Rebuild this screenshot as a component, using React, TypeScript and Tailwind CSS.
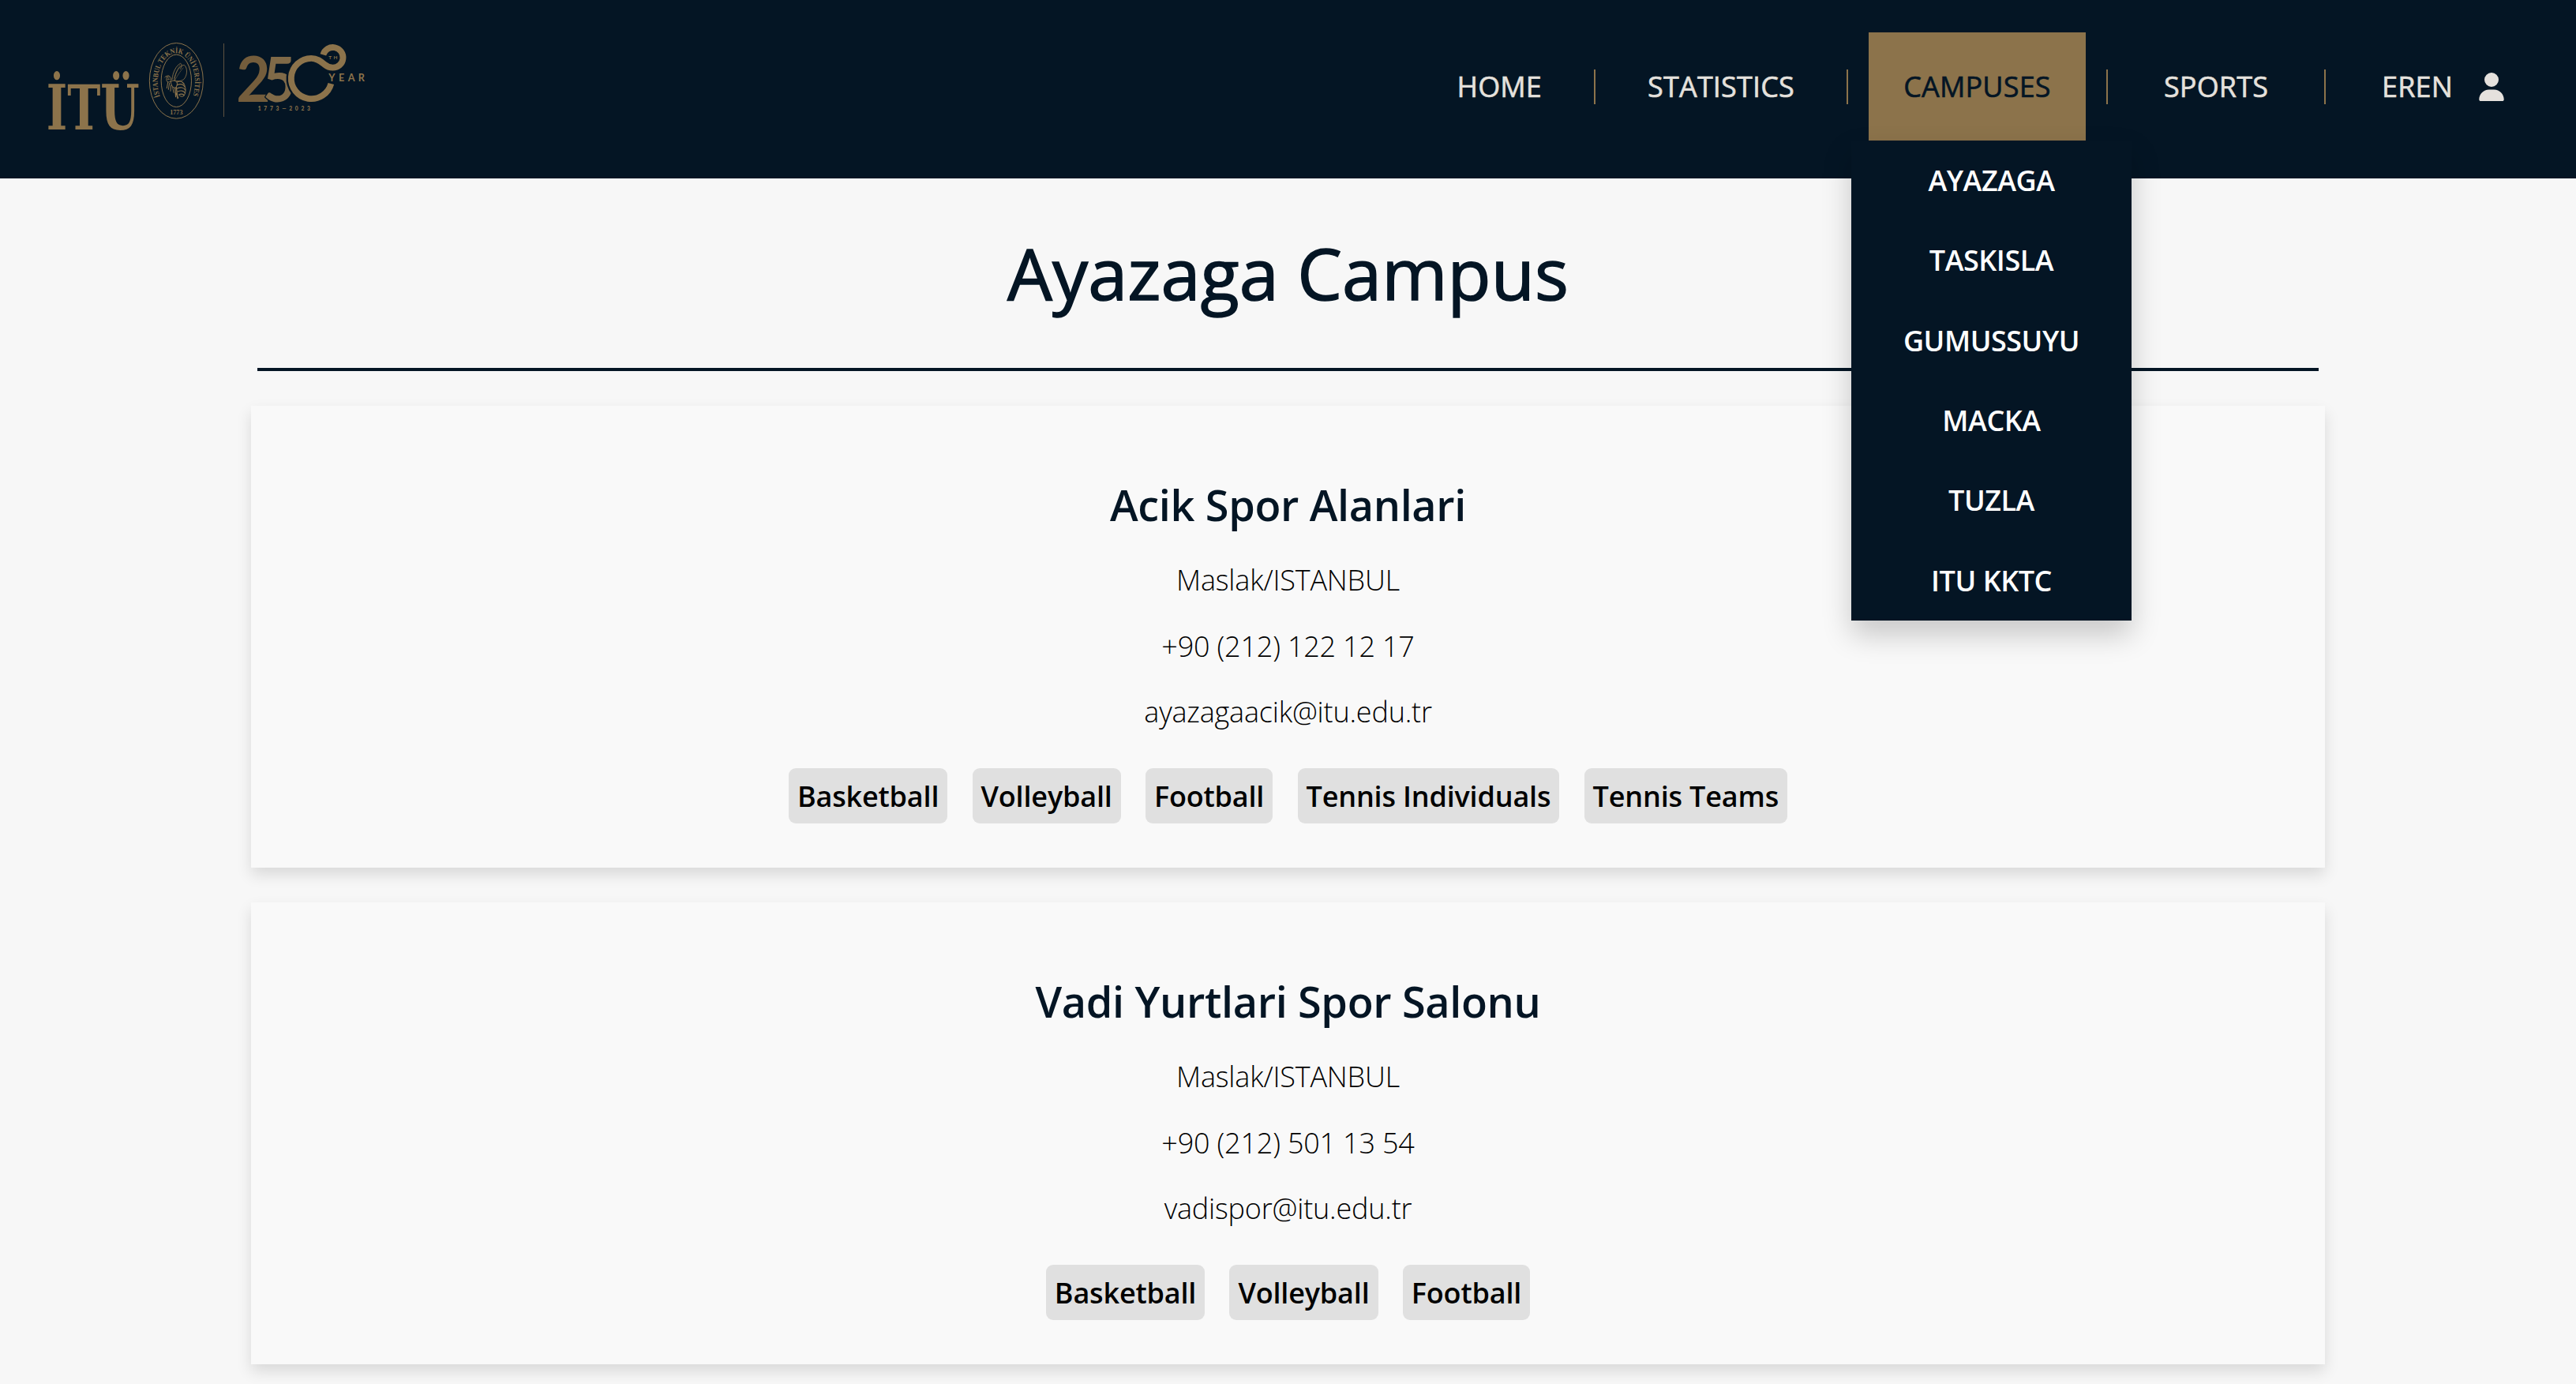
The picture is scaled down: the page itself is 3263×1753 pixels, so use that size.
import { FaUser } from "react-icons/fa6";

const campuses = ["AYAZAGA", "TASKISLA", "GUMUSSUYU", "MACKA", "TUZLA", "ITU KKTC"];

const facilities = [
  {
    name: "Acik Spor Alanlari",
    address: "Maslak/ISTANBUL",
    phone: "+90 (212) 122 12 17",
    email: "ayazagaacik@itu.edu.tr",
    sports: ["Basketball", "Volleyball", "Football", "Tennis Individuals", "Tennis Teams"],
  },
  {
    name: "Vadi Yurtlari Spor Salonu",
    address: "Maslak/ISTANBUL",
    phone: "+90 (212) 501 13 54",
    email: "vadispor@itu.edu.tr",
    sports: ["Basketball", "Volleyball", "Football"],
  },
];

function Logo() {
  return (
    <svg className="h-[226px] w-[480px] shrink-0" viewBox="0 0 480 226" fill="#8c734b" aria-label="İTÜ 250th year">
      <g transform="translate(40 30) scale(0.33333)">
        <text x="56" y="403" fontFamily="DejaVu Serif" fontWeight="700" fontSize="236" textLength="354" lengthAdjust="spacingAndGlyphs">
          İTÜ
        </text>

        {/* seal */}
        <g fill="none" stroke="#8c734b" strokeWidth="3">
          <ellipse cx="550" cy="217" rx="102" ry="143.500" />
          <ellipse cx="550" cy="217" rx="57.500" ry="99.500" />
        </g>
        <path id="seal-arc" d="M488 277 A71 111 0 1 1 612 277" fill="none" />
        <text fontFamily="Liberation Serif" fontWeight="700" fontSize="28">
          <textPath href="#seal-arc" textLength="405" lengthAdjust="spacingAndGlyphs">
            İSTANBUL TEKNİK ÜNİVERSİTESİ
          </textPath>
        </text>
        <text x="550" y="346" textAnchor="middle" fontFamily="Liberation Serif" fontWeight="700" fontSize="27" textLength="49" lengthAdjust="spacingAndGlyphs">
          1773
        </text>

        {/* bee */}
        <g fill="none" stroke="#8c734b" strokeWidth="2.500" strokeLinecap="round" strokeLinejoin="round">
          <path d="M534 212 C536 185 550 158 566 151 C573 154 570 164 566 172" />
          <path d="M543 215 C546 182 562 160 580 157 C594 168 592 198 578 212 C566 220 552 219 543 215 Z" />
          <path d="M546 212 C556 194 566 180 576 168" strokeWidth="1.500" />
          <path d="M540 208 C548 190 554 172 564 158" strokeWidth="1.500" />
          <ellipse cx="521" cy="211" rx="9" ry="11" />
          <path d="M518 207 h5 M516 212 h8" />
          <path d="M516 202 C514 197 509 200 506 204 M524 200 C520 195 515 198 512 200" />
          <path d="M529 220 C536 214 546 216 552 222 C556 230 552 240 546 244 C538 244 530 236 529 220 Z" strokeWidth="3" />
          <path d="M518 223 L514 245 M524 226 L520 250 M530 234 L528 256 M536 240 L540 262" strokeWidth="3" />
          <path d="M545 244 L548 278 M550 242 L555 284 M549 264 L557 282" strokeWidth="4" />
          <path
            d="M553 222 C564 217 574 220 578 228 M552 234 C566 226 578 231 582 240 M553 246 C566 240 580 242 584 252 M555 258 C566 253 579 254 583 263 M560 270 C566 266 576 266 580 272"
            strokeWidth="3.500"
          />
          <path d="M578 226 C588 244 587 262 579 274 C573 279 565 277 561 272" strokeWidth="3" />
        </g>
      </g>

      <g transform="translate(260 30) scale(0.33333)">
        <rect x="69" y="75" width="3" height="279" fill="#5d5140" />
        {/* anniversary mark */}
        <g fontFamily="Lato" fontWeight="700" stroke="#041524" strokeWidth="8" paintOrder="stroke">
          <text x="118" y="296" fontSize="243" textLength="130" lengthAdjust="spacingAndGlyphs" fill="#745d3c">
            2
          </text>
          <text x="220" y="296" fontSize="236" textLength="123" lengthAdjust="spacingAndGlyphs" fill="#806a48">
            5
          </text>
        </g>
        <g fill="none">
          <path d="M478 228 A77 77 0 1 1 403 131" stroke="#041524" strokeWidth="38" />
          <path
            d="M478 228 A77 77 0 1 1 403 131.500 C426 131.500 440 144 453 155 C463 163 472 167 484 167 A38.500 38.500 0 1 0 448 118"
            stroke="#8c734b"
            strokeWidth="23.500"
          />
        </g>
        <g fontFamily="Lato" fontWeight="700">
          <text x="469" y="134" fontSize="19" textLength="33">TH</text>
          <text x="469" y="219" fontSize="38" textLength="137">YEAR</text>
          <text x="200" y="330" fontSize="20" fontWeight="900" textLength="199">1773—2023</text>
        </g>
      </g>
    </svg>
  );
}

function Divider() {
  return <span className="h-11 w-0.5 shrink-0 bg-[#8c734b]" />;
}

function CampusMenu() {
  return (
    <div className="relative mx-[26px] w-[275px]">
      <a className="block bg-[#8c734b] py-11 text-center text-[#041524]">CAMPUSES</a>
      <ul className="absolute top-full -left-[22px] z-10 w-[355px] bg-[#041524] text-center font-semibold tracking-[-0.45px] text-white shadow-[0_18px_35px_rgba(0,0,0,0.2)] [-webkit-text-stroke:0]">
        {campuses.map((campus) => (
          <li key={campus} className="py-[26.150px]">
            {campus}
          </li>
        ))}
      </ul>
    </div>
  );
}

export default function App() {
  return (
    <div className="h-[1753px] overflow-hidden bg-[#f7f7f7] font-['Open_Sans',sans-serif] text-[36px] leading-[49px] text-black">
      <header className="flex h-[226px] items-start justify-between bg-[#041524]">
        <Logo />
        <nav className="mt-[41px] flex h-[137px] items-center tracking-[0.15px] whitespace-nowrap text-[#e5e1dd] [-webkit-text-stroke:0.6px_currentColor]">
          <a className="pr-[66px]">HOME</a>
          <Divider />
          <a className="w-[318px] text-center">STATISTICS</a>
          <Divider />
          <CampusMenu />
          <Divider />
          <a className="w-[274px] text-center">SPORTS</a>
          <Divider />
          <a className="flex w-[317px] items-center pl-[71px]">
            <span className="w-[121px]">EREN</span>
            <FaUser />
          </a>
        </nav>
      </header>

      <main className="mx-auto w-[2627px]">
        <div className="mx-2 mb-11 flex h-[244px] justify-center border-b-4 border-[#041524] pt-[58px]">
          <h1 className="text-[90px] leading-[122px] tracking-[0.1px] text-[#041524] [-webkit-text-stroke:1.5px_currentColor]">
            Ayazaga Campus
          </h1>
        </div>
        <div className="flex flex-col gap-11">
          {facilities.map((facility) => (
            <section
              key={facility.name}
              className="flex h-[585px] flex-col items-center bg-[#f9f9f9] pt-[88px] shadow-[0_9px_18px_rgba(0,0,0,0.12)]"
            >
              <h2 className="mb-[34px] text-[54px] leading-[74px] font-semibold tracking-[-0.35px] text-[#041524]">
                {facility.name}
              </h2>
              <div className="flex flex-col items-center gap-[34.500px] font-light tracking-[-0.2px]">
                <p>{facility.address}</p>
                <p>{facility.phone}</p>
                <p>{facility.email}</p>
              </div>
              <ul className="mt-[47px] flex gap-[31.300px] font-semibold tracking-[-0.18px]">
                {facility.sports.map((sport) => (
                  <li key={sport} className="h-[70px] rounded-[9px] bg-[#e0e0e0] px-[11px] pt-[11px]">
                    {sport}
                  </li>
                ))}
              </ul>
            </section>
          ))}
        </div>
      </main>
    </div>
  );
}
